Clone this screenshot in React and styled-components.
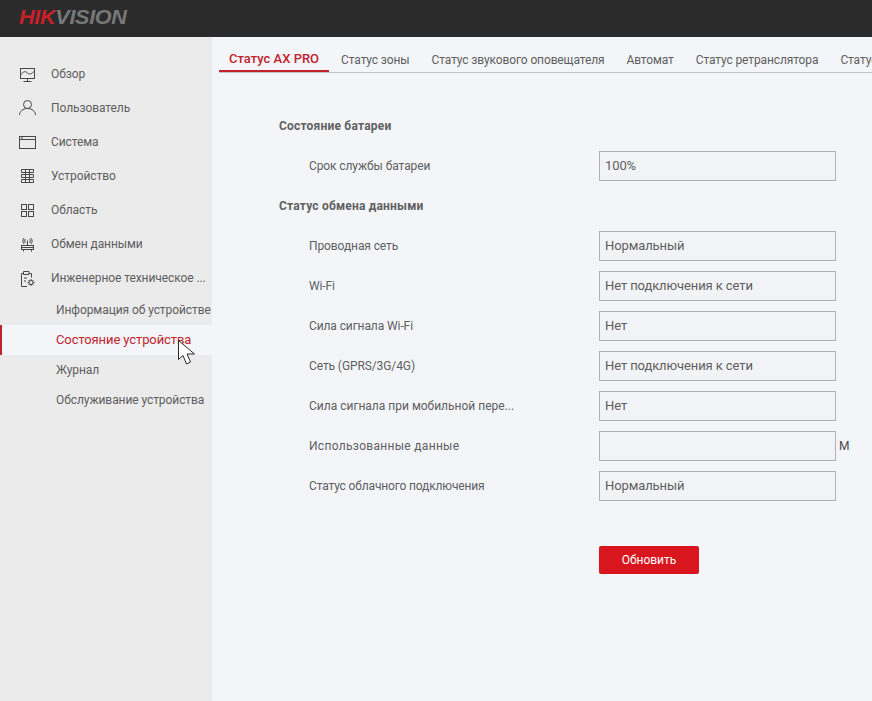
import styled, { createGlobalStyle } from "styled-components";

const Global = createGlobalStyle`
  html, body {
    margin: 0;
    padding: 0;
    height: 100%;
    overflow: hidden;
  }
  body {
    font-family: Roboto, "Liberation Sans", sans-serif;
    font-size: 12px;
    color: #5e5e5e;
    background: #f3f5f9;
  }
`;

const Page = styled.div`
  position: relative;
  width: 872px;
  height: 701px;
  display: flex;
  flex-direction: column;
  overflow: hidden;
`;

const Header = styled.header`
  height: 37px;
  flex: none;
  background: #2b2b2b;
  display: flex;
  align-items: center;
  padding: 0 0 3px 19px;
  box-sizing: border-box;
`;

const Logo = styled.div`
  font-family: "Liberation Sans", sans-serif;
  font-style: italic;
  font-size: 19.5px;
  letter-spacing: -0.3px;
  color: #77787a;
  font-weight: 700;
  transform: scaleX(1.11);
  transform-origin: left center;
  b {
    color: #c8202a;
    font-weight: 700;
  }
`;

const Body = styled.div`
  flex: 1;
  display: flex;
  min-height: 0;
`;

const Side = styled.aside`
  width: 212px;
  flex: none;
  background: #ebebeb;
  padding-top: 20px;
  box-sizing: border-box;
  letter-spacing: -0.08px;
`;

const MenuItem = styled.div`
  height: 34px;
  display: flex;
  align-items: center;
  padding-left: 19px;
  color: #5e5e5e;
  white-space: nowrap;
  svg {
    width: 17px;
    height: 17px;
    margin-right: 15px;
    flex: none;
    fill: none;
    stroke: #484848;
    stroke-width: 1;
  }
`;

const SubItem = styled.div`
  height: 30px;
  line-height: 30px;
  padding-left: 56px;
  box-sizing: border-box;
  white-space: nowrap;
  overflow: hidden;
  color: #5e5e5e;
  ${(p) =>
    p.$active &&
    `
    padding-left: 54px;
    color: #c0232c;
    font-size: 13px;
    letter-spacing: -0.1px;
    background: #f3f5f9;
    border-left: 2px solid #c0232c;
  `}
`;

const Cursor = styled.svg`
  position: absolute;
  left: 177px;
  top: 339px;
  width: 20px;
  height: 27px;
`;

const Main = styled.main`
  flex: 1;
  min-width: 0;
  padding: 0 0 0 7px;
  overflow: hidden;
`;

const Tabs = styled.nav`
  display: flex;
  gap: 2px;
  height: 36px;
  border-bottom: 1px solid #c3c5c9;
  box-sizing: border-box;
  white-space: nowrap;
  overflow: hidden;
  letter-spacing: -0.12px;
`;

const Tab = styled.div`
  padding: 0 10px;
  height: 35px;
  box-sizing: border-box;
  line-height: 47px;
  color: #5e5e5e;
  ${(p) =>
    p.$active &&
    `
    color: #c0232c;
    font-size: 13px;
    letter-spacing: 0;
    font-weight: 500;
    line-height: 43px;
    border-bottom: 2px solid #c0232c;
  `}
`;

const Form = styled.div`
  padding: 33px 0 0 60px;
`;

const Row = styled.div`
  height: 40px;
  display: flex;
  align-items: center;
  letter-spacing: -0.1px;
`;

const Section = styled(Row)`
  font-weight: 700;
  letter-spacing: 0.2px;
  color: #606060;
`;

const Label = styled.div`
  width: 320px;
  padding-left: 30px;
  box-sizing: border-box;
  flex: none;
  letter-spacing: ${(p) => p.$spacing || "inherit"};
`;

const Field = styled.div`
  width: 237px;
  height: 30px;
  flex: none;
  box-sizing: border-box;
  border: 1px solid #aeb0b4;
  background: #f2f3f6;
  font-size: 13px;
  line-height: 28px;
  padding-left: 5px;
  color: #5e5e5e;
`;

const Unit = styled.span`
  margin-left: 3px;
  color: #4a4a4a;
`;

const Button = styled.button`
  display: block;
  margin: 40px 0 0 320px;
  width: 100px;
  height: 28px;
  border: none;
  border-radius: 2px;
  background: #d9161d;
  color: #fff;
  font: inherit;
  padding: 0;
`;

const Overview = () => (
  <svg viewBox="0 0 17 17">
    <rect x="1.5" y="2.5" width="14" height="10" />
    <path d="M1.500 9c3-4 5-4 7-2s4 1 7-2M8.500 12.500v3M4.500 15.500h8" />
  </svg>
);
const User = () => (
  <svg viewBox="0 0 17 17">
    <circle cx="8.500" cy="4.500" r="4" />
    <path d="M0.500 15c0-3.500 3.500-6.500 8-6.500s8 3 8 6.500" />
  </svg>
);
const System = () => (
  <svg viewBox="0 0 17 17">
    <rect x="0.500" y="2.500" width="16" height="12" />
    <path d="M0.500 5.500h16M2 4h2" />
  </svg>
);
const Device = () => (
  <svg viewBox="0 0 17 17">
    <path d="M2.500 1.500h12v3h-12zM2.500 6.500h12v3h-12zM2.500 11.500h12v3h-12zM6.500 1.500v13M10.500 1.500v13" />
  </svg>
);
const Area = () => (
  <svg viewBox="0 0 17 17">
    <rect x="2.500" y="2.500" width="5" height="5" />
    <rect x="9.500" y="2.500" width="5" height="5" />
    <rect x="2.500" y="9.500" width="5" height="5" />
    <rect x="9.500" y="9.500" width="5" height="5" />
  </svg>
);
const Exchange = () => (
  <svg viewBox="0 0 17 17">
    <rect x="2.500" y="9.500" width="12" height="4" />
    <path d="M2.500 11.500h12M4.500 15.500v-2M12.500 15.500v-2M8.500 9.500v-5M6.500 7c-1-1-1-3 0-4M10.500 7c1-1 1-3 0-4M5 8c-1.500-2-1.500-4 0-6M12 8c1.500-2 1.500-4 0-6" />
  </svg>
);
const Maintenance = () => (
  <svg viewBox="0 0 17 17">
    <path d="M8 16.500h-5.500v-13h2M10 3.500h2.500v4M4.500 1.500h5.500v3h-5.500zM5 8h3M5 11h2" />
    <circle cx="12" cy="12.500" r="2" />
    <path d="M12 9v1.500M12 14.500v1.500M8.500 12.500h1.500M14 12.500h1.500M9.500 10l1 1M13.500 14l1 1M9.500 15l1-1M13.500 11l1-1" />
  </svg>
);

const menu = [
  ["Обзор", Overview],
  ["Пользователь", User],
  ["Система", System],
  ["Устройство", Device],
  ["Область", Area],
  ["Обмен данными", Exchange],
  ["Инженерное техническое ...", Maintenance],
];

const subs = ["Информация об устройстве", "Состояние устройства", "Журнал", "Обслуживание устройства"];

const tabs = ["Статус AX PRO", "Статус зоны", "Статус звукового оповещателя", "Автомат", "Статус ретранслятора", "Статус"];

const App = () => (
  <Page>
    <Global />
    <Header>
      <Logo>
        <b>HIK</b>VISION
      </Logo>
    </Header>
    <Body>
      <Side>
        {menu.map(([name, Icon]) => (
          <MenuItem key={name}>
            <Icon />
            {name}
          </MenuItem>
        ))}
        {subs.map((s, i) => (
          <SubItem key={s} $active={i === 1}>
            {s}
          </SubItem>
        ))}
      </Side>
      <Main>
        <Tabs>
          {tabs.map((t, i) => (
            <Tab key={t} $active={i === 0}>
              {t}
            </Tab>
          ))}
        </Tabs>
        <Form>
          <Section>Состояние батареи</Section>
          <Row>
            <Label>Срок службы батареи</Label>
            <Field>100%</Field>
          </Row>
          <Section>Статус обмена данными</Section>
          <Row>
            <Label>Проводная сеть</Label>
            <Field>Нормальный</Field>
          </Row>
          <Row>
            <Label>Wi-Fi</Label>
            <Field>Нет подключения к сети</Field>
          </Row>
          <Row>
            <Label>Сила сигнала Wi-Fi</Label>
            <Field>Нет</Field>
          </Row>
          <Row>
            <Label>Сеть (GPRS/3G/4G)</Label>
            <Field>Нет подключения к сети</Field>
          </Row>
          <Row>
            <Label $spacing="0">Сила сигнала при мобильной пере...</Label>
            <Field>Нет</Field>
          </Row>
          <Row>
            <Label $spacing="0.3px">Использованные данные</Label>
            <Field />
            <Unit>M</Unit>
          </Row>
          <Row>
            <Label $spacing="-0.15px">Статус облачного подключения</Label>
            <Field>Нормальный</Field>
          </Row>
          <Button>Обновить</Button>
        </Form>
      </Main>
    </Body>
    <Cursor viewBox="0 0 20 27">
      <path d="M1.500 1.500v19l4.500-4 3.500 8.500 4-2-3.500-8h7.500z" fill="#fff" stroke="#2a2a2a" strokeWidth="1" />
    </Cursor>
  </Page>
);

export default App;
